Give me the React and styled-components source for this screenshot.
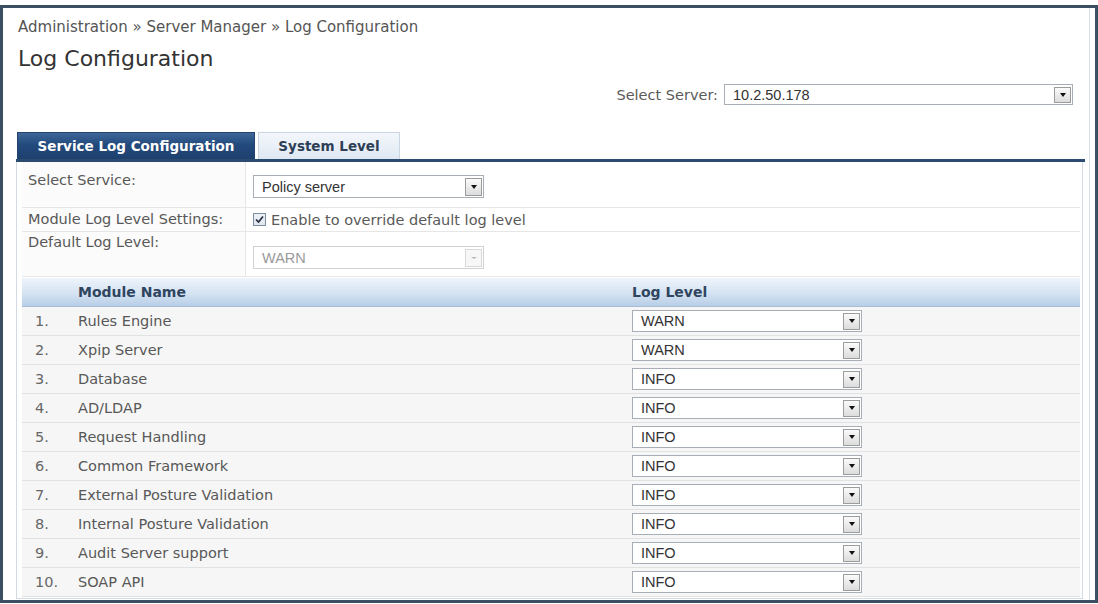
import React from 'react';
import styled, { createGlobalStyle } from 'styled-components';

const GlobalStyle = createGlobalStyle`
  body {
    margin: 0;
    background: #fff;
    font-family: "DejaVu Sans", Verdana, sans-serif;
    overflow: hidden;
  }
`

const Frame = styled.div`
  box-sizing: border-box;
  margin-top: 5px;
  width: 1098px;
  height: 598px;
  border: 3px solid #3a4f62;
  padding: 0 10px 0 13px;
  box-shadow: inset -5px 0 0 #fff, inset -6px 0 0 #d6dee6;
`
const Breadcrumb = styled.div`
  margin: 10px 0 0 2px;
  font-size: 15px;
  line-height: 18px;
  color: #555;
`
const Title = styled.h1`
  margin: 10px 0 0 2px;
  font-size: 22px;
  line-height: 26px;
  font-weight: normal;
  color: #333;
`
const ServerRow = styled.div`
  display: flex;
  justify-content: flex-end;
  align-items: center;
  gap: 6px;
  margin-top: 12px;
  padding-right: 12px;
`
const Label = styled.span`
  font-size: 14.5px;
  color: #5a5a5a;
`
const Tabs = styled.div`
  display: flex;
  gap: 3px;
  margin-top: 27px;
  padding-left: 1px;
  height: 27px;
`
const Tab = styled.div`
  box-sizing: border-box;
  width: ${p => p.width}px;
  display: flex;
  align-items: center;
  justify-content: center;
  font-size: 13.5px;
  font-weight: bold;
  color: ${p => p.active ? '#fff' : '#2d3f57'};
  background: ${p => p.active
    ? 'linear-gradient(#3f6699, #234a7c 45%, #1d406f)'
    : 'linear-gradient(#f3f7fb, #dfe8f2)'};
  border: 1px solid ${p => p.active ? '#22456f' : '#c9d5e2'};
  border-bottom: none;
`
const TabLine = styled.div`
  height: 3px;
  background: #2b4b70;
`
const Panel = styled.div`
  box-sizing: border-box;
  margin-right: 2px;
  height: 437px;
  border: 1px solid #d3dae2;
  border-top: none;
  padding: 0 2px 0 5px;
`
const FormRow = styled.div`
  display: grid;
  grid-template-columns: 224px 1fr;
  height: ${p => p.height}px;
  border-bottom: 1px solid #e6e6e6;
`
const FormLabel = styled.div`
  padding: ${p => p.pad}px 0 0 6px;
  font-size: 14.5px;
  color: #585858;
  border-right: 1px solid #e6e6e6;
  background: #fbfbfb;
`
const FormControl = styled.div`
  display: flex;
  align-items: ${p => p.center ? 'center' : 'flex-start'};
  padding: ${p => p.pad || 0}px 0 0 7px;
  gap: 5px;
`
const SelectBox = styled.div`
  box-sizing: border-box;
  width: ${p => p.width}px;
  height: ${p => p.height}px;
  display: flex;
  align-items: center;
  justify-content: space-between;
  border: 1px solid ${p => p.disabled ? '#cfd3d7' : '#a7aeb5'};
  background: #fff;
  padding: 0 1px 0 8px;
  font-family: "Liberation Sans", Arial, sans-serif;
  font-size: 14.5px;
  color: ${p => p.disabled ? '#9a9a9a' : '#333'};
`
const ArrowBox = styled.div`
  box-sizing: border-box;
  width: 17px;
  height: calc(100% - 3px);
  display: flex;
  align-items: center;
  justify-content: center;
  border: 1px solid ${p => p.disabled ? '#d8d8d8' : '#9c9c9c'};
  background: ${p => p.disabled ? '#f7f7f7' : 'linear-gradient(#fafafa, #dcdcdc)'};

  &::after {
    content: '';
    border-left: 3.5px solid transparent;
    border-right: 3.5px solid transparent;
    border-top: ${p => p.disabled ? '2px solid #b8b8b8' : '4px solid #111'};
  }
`
const CheckBox = styled.span`
  box-sizing: border-box;
  width: 13px;
  height: 13px;
  border: 1px solid #7d8ea0;
  background: linear-gradient(#eef2f7, #dfe6ee);
  display: inline-flex;
  align-items: center;
  justify-content: center;
`
const Table = styled.div`
  margin-top: 1px;
`
const HeadRow = styled.div`
  display: grid;
  grid-template-columns: 56px 554px 1fr;
  height: 28px;
  align-items: center;
  background: linear-gradient(#eef4fb, #d5e3f2 55%, #b7cee7);
  border-bottom: 1px solid #a9bed4;
  font-size: 14px;
  font-weight: bold;
  color: #2f4560;
`
const Row = styled.div`
  display: grid;
  grid-template-columns: 56px 554px 1fr;
  height: 28px;
  align-items: center;
  background: #f6f6f6;
  border-bottom: 1px solid #e2e2e2;
  font-size: 14.5px;
  color: #585858;
`
const Num = styled.span`
  padding-left: 13px;
  color: #666;
`

const Select = ({ value, width, height, disabled }) => (
  <SelectBox width={width} height={height} disabled={disabled}>
    <span>{value}</span>
    <ArrowBox disabled={disabled} />
  </SelectBox>
)

const modules = [
  ['Rules Engine', 'WARN'],
  ['Xpip Server', 'WARN'],
  ['Database', 'INFO'],
  ['AD/LDAP', 'INFO'],
  ['Request Handling', 'INFO'],
  ['Common Framework', 'INFO'],
  ['External Posture Validation', 'INFO'],
  ['Internal Posture Validation', 'INFO'],
  ['Audit Server support', 'INFO'],
  ['SOAP API', 'INFO'],
];

export default function App() {
  return (
    <>
      <GlobalStyle />
      <Frame>
        <Breadcrumb>Administration » Server Manager » Log Configuration</Breadcrumb>
        <Title>Log Configuration</Title>
        <ServerRow>
          <Label>Select Server:</Label>
          <Select value="10.2.50.178" width={349} height={21} />
        </ServerRow>
        <Tabs>
          <Tab active width={238}>Service Log Configuration</Tab>
          <Tab width={142}>System Level</Tab>
        </Tabs>
        <TabLine />
        <Panel>
          <FormRow height={45}>
            <FormLabel pad={10}>Select Service:</FormLabel>
            <FormControl pad={13}>
              <Select value="Policy server" width={231} height={23} />
            </FormControl>
          </FormRow>
          <FormRow height={23}>
            <FormLabel pad={3}>Module Log Level Settings:</FormLabel>
            <FormControl center>
              <CheckBox>
                <svg width="9" height="9" viewBox="0 0 9 9">
                  <path d="M1 4.5 L3.5 7 L8 1.5" stroke="#1e2a3a" strokeWidth="1.6" fill="none" />
                </svg>
              </CheckBox>
              <Label>Enable to override default log level</Label>
            </FormControl>
          </FormRow>
          <FormRow height={44}>
            <FormLabel pad={2}>Default Log Level:</FormLabel>
            <FormControl pad={14}>
              <Select value="WARN" width={231} height={23} disabled />
            </FormControl>
          </FormRow>
          <Table>
            <HeadRow>
              <span />
              <span>Module Name</span>
              <span>Log Level</span>
            </HeadRow>
            {modules.map(([name, level], i) => (
              <Row key={name}>
                <Num>{i + 1}.</Num>
                <span>{name}</span>
                <Select value={level} width={230} height={22} />
              </Row>
            ))}
          </Table>
        </Panel>
      </Frame>
    </>
  );
}
